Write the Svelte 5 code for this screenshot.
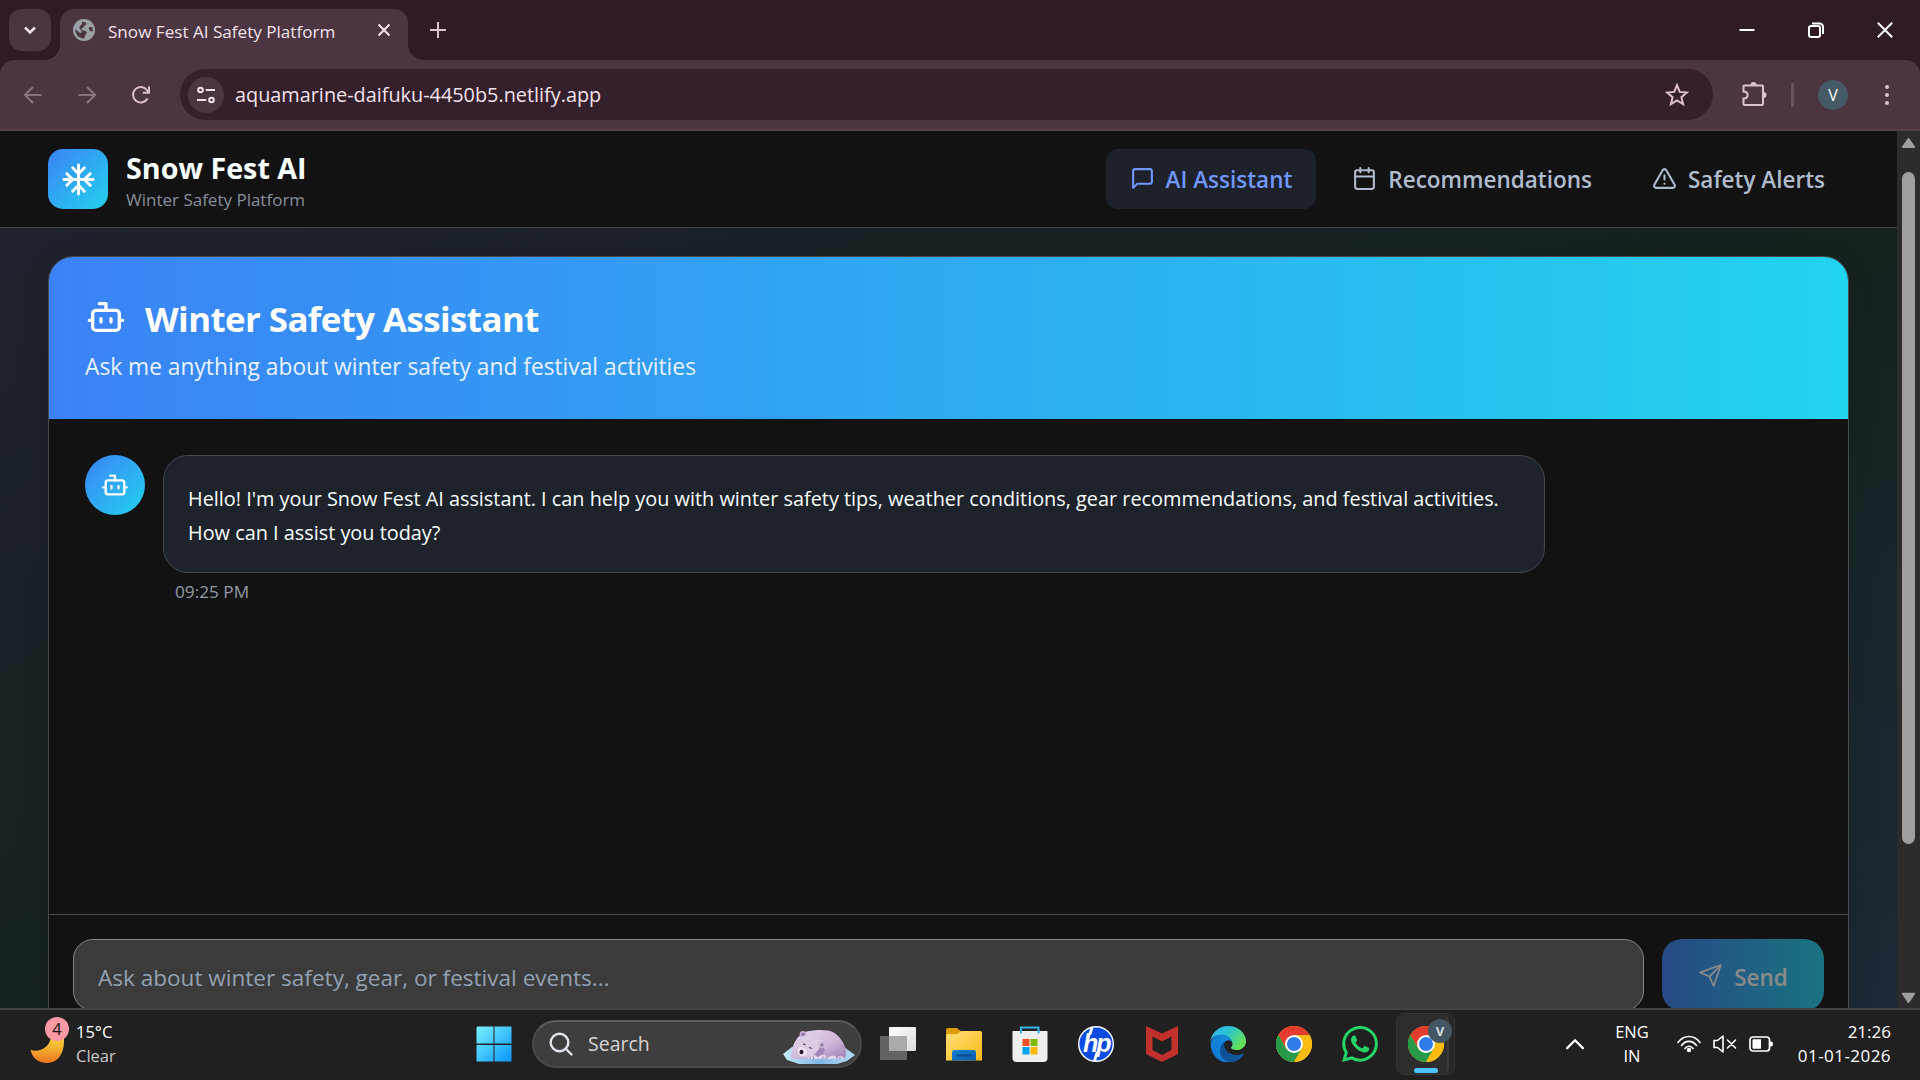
<script>
	let draft = "";

	const navItems = [
		{label: "AI Assistant", icon: "chat", active: true},
		{label: "Recommendations", icon: "calendar", active: false},
		{label: "Safety Alerts", icon: "alert", active: false}
	];

	const messages = [
		{
			text: "Hello! I'm your Snow Fest AI assistant. I can help you with winter safety tips, weather conditions, gear recommendations, and festival activities. How can I assist you today?",
			time: "09:25 PM"
		}
	];

	const apps = ["taskview", "explorer", "store", "hp", "mcafee", "edge", "chrome", "whatsapp"];
</script>

{#snippet bot()}
	<svg class="line" viewBox="0 0 24 24"><path d="M12 8V4H8" /><rect width="16" height="12" x="4" y="8" rx="2" /><path d="M2 14h2M20 14h2M15 13v2M9 13v2" /></svg>
{/snippet}

{#snippet chrome()}
	<svg viewBox="0 0 36 36">
		<circle cx="18" cy="18" r="18" fill="#fbbc12" />
		<path d="M2.400 9A18 18 0 0 1 33.600 9L18 9.500 10.200 22.500z" fill="#e33b2e" />
		<path d="M2.400 9A18 18 0 0 0 18 36L25.800 22.500 18 26 10.200 22.500z" fill="#269a48" />
		<path d="M18 9h15.600a18 18 0 0 1-15.600 27l7.800-13.500z" fill="#fbbc12" />
		<circle cx="18" cy="18" r="9" fill="#fff" />
		<circle cx="18" cy="18" r="7" fill="#2f7bea" />
	</svg>
{/snippet}

<div class="screen">
	<div class="tabstrip">
		<button class="tabsearch" aria-label="Search tabs"><svg class="line" viewBox="0 0 16 16"><path d="M3 5.500l5 5 5-5" /></svg></button>
		<div class="tab">
			<svg class="favicon" viewBox="0 0 22 22">
				<circle cx="11" cy="11" r="11" fill="#9aa0a6" />
				<path d="M9 2.500c2 1 4 .5 4.500 2S11 6.500 10.500 8 8 9 8.500 10.500s4 .5 5 2.500-1.500 2-1.500 4-1.500 2.500-2.500 2.500A9 9 0 0 1 2.200 10l4 3.500c1 .8 2.300.5 2.300-1S6 10 6.500 8 9 6 9 4.500z" fill="#4b3541" />
				<path d="M16 8.500c1-1 3-.5 3.500.5l.3 3c-1 1-2.300.5-2.800-.5s-2-2-1-3z" fill="#4b3541" />
			</svg>
			<span class="tabtitle">Snow Fest AI Safety Platform</span>
			<svg class="line tabclose" viewBox="0 0 14 14"><path d="M1.500 1.500l11 11M12.500 1.500l-11 11" /></svg>
		</div>
		<svg class="line newtab" viewBox="0 0 16 16"><path d="M8 0v16M0 8h16" /></svg>
		<div class="wincontrols">
			<svg class="line" viewBox="0 0 16 16"><path d="M.5 8h15" /></svg>
			<svg class="line" viewBox="0 0 16 16"><rect x="1" y="4" width="11" height="11" rx="2" /><path d="M4 1.500h7.500a3.500 3.500 0 0 1 3.500 3.500V12" /></svg>
			<svg class="line" viewBox="0 0 16 16"><path d="M.8.8l14.400 14.400M15.200.8L.8 15.200" /></svg>
		</div>
	</div>

	<div class="toolbar">
		<svg class="line nav dim" viewBox="0 0 18 18"><path d="M17.500 9H1.500M9 1L1 9l8 8" /></svg>
		<svg class="line nav dim" viewBox="0 0 18 18"><path d="M.5 9h16M9 1l8 8-8 8" /></svg>
		<svg class="line nav" viewBox="0 0 18 18"><path d="M15.500 12.500A7.700 7.700 0 1 1 14.800 4l2 2.500M17 .5v6.300h-6.200" /></svg>
		<div class="omnibox">
			<span class="siteinfo"><svg class="line" viewBox="0 0 18 18"><circle cx="3.500" cy="4" r="2.300" /><path d="M9.500 4h8M.5 14h8" /><circle cx="14.500" cy="14" r="2.300" /></svg></span>
			<span class="url">aquamarine-daifuku-4450b5.netlify.app</span>
			<svg class="line star" viewBox="0 0 24 24"><path d="M12 2.200l2.700 6.700 7.200.6-5.500 4.700 1.700 7L12 17.500l-6.100 3.700 1.700-7-5.500-4.700 7.200-.6z" /></svg>
		</div>
		<svg class="puzzle" viewBox="0 0 26 26"><path d="M4 5.500h17a1 1 0 0 1 1 1V24a1 1 0 0 1-1 1H3.500a1 1 0 0 1-1-1v-5.500c5.500 0 5.500-7 0-7V6.500a1 1 0 0 1 1-1z" fill="none" stroke="#dfc0d0" stroke-width="2" /><path d="M9.500 5a3 3 0 0 1 6 0zM22.500 12a3 3 0 0 1 0 6z" fill="#dfc0d0" /></svg>
		<i class="sep"></i>
		<span class="profile">V</span>
		<span class="dots"><i></i><i></i><i></i></span>
	</div>

	<div class="view">
		<div class="page">
			<header>
				<div class="logo"><svg class="line" viewBox="0 0 24 24"><path d="M2 12h20M12 2v20M20 16l-4-4 4-4M4 8l4 4-4 4M16 4l-4 4-4-4M8 20l4-4 4 4" /></svg></div>
				<div class="brand">
					<h1>Snow Fest AI</h1>
					<p>Winter Safety Platform</p>
				</div>
				<nav>
					{#each navItems as item}
						<button class:active={item.active}>
							<svg class="line" viewBox="0 0 24 24">
								{#if item.icon === "chat"}
									<path d="M21 15a2 2 0 0 1-2 2H7l-4 4V5a2 2 0 0 1 2-2h14a2 2 0 0 1 2 2z" />
								{:else if item.icon === "calendar"}
									<path d="M8 2v4M16 2v4M3 10h18" /><rect width="18" height="18" x="3" y="4" rx="2" />
								{:else}
									<path d="M21.730 18l-8-14a2 2 0 0 0-3.480 0l-8 14A2 2 0 0 0 4 21h16a2 2 0 0 0 1.730-3zM12 9v4M12 17h.01" />
								{/if}
							</svg>
							<span>{item.label}</span>
						</button>
					{/each}
				</nav>
			</header>

			<main>
				<section class="card">
					<div class="hero">
						<h2>{@render bot()}<span>Winter Safety Assistant</span></h2>
						<p>Ask me anything about winter safety and festival activities</p>
					</div>
					<div class="messages">
						{#each messages as message}
							<div class="message">
								<div class="avatar">{@render bot()}</div>
								<div>
									<div class="bubble">{message.text}</div>
									<div class="time">{message.time}</div>
								</div>
							</div>
						{/each}
					</div>
					<div class="composer">
						<input bind:value={draft} placeholder="Ask about winter safety, gear, or festival events..." />
						<button class="send" disabled={!draft}>
							<svg class="line" viewBox="0 0 24 24"><path d="M22 2l-7 20-4-9-9-4zM22 2L11 13" /></svg>
							<span>Send</span>
						</button>
					</div>
				</section>
			</main>
		</div>
		<div class="scrollbar">
			<svg viewBox="0 0 14 11"><path d="M7 1.500L12.500 9.500h-11z" /></svg>
			<i></i>
			<svg viewBox="0 0 14 11"><path d="M7 9.500L1.500 1.500h11z" /></svg>
		</div>
	</div>

	<footer>
		<div class="weather">
			<svg viewBox="0 0 36 36">
				<defs><linearGradient id="moon" x1="0" y1="0" x2="0" y2="1"><stop offset="0" stop-color="#f6cf3c" /><stop offset=".4" stop-color="#f3b530" /><stop offset="1" stop-color="#ee7420" /></linearGradient></defs>
				<path d="M1.500 22.500C11 25 21 20 22 9h13v5c0 13-7 21.500-17 21.500-9 0-14.500-5-16.500-13z" fill="url(#moon)" />
			</svg>
			<span class="badge">4</span>
			<div><div>15°C</div><div class="muted">Clear</div></div>
		</div>

		<div class="apps">
			<svg class="start" viewBox="0 0 36 36">
				<defs><linearGradient id="win" gradientUnits="userSpaceOnUse" x1="0" y1="0" x2="36" y2="36"><stop offset="0" stop-color="#7df3ff" /><stop offset=".5" stop-color="#3fc4fd" /><stop offset="1" stop-color="#0a92fb" /></linearGradient></defs>
				<path d="M1.500.5H17.500v17H.500v-16zM18.500.5h17v17h-17zM.500 19H17.500v16.500H.500zM18.500 19h17v16.500h-17z" fill="url(#win)" />
			</svg>
			<div class="search">
				<svg class="line" viewBox="0 0 24 24"><circle cx="10.500" cy="10.500" r="8.800" /><path d="M17 17l5.500 5.500" /></svg>
				<span>Search</span>
				<svg class="bear" viewBox="0 0 72 34">
					<defs>
						<linearGradient id="fur" x1="0" y1="0" x2="1" y2="1"><stop offset="0" stop-color="#e9dcf0" /><stop offset=".6" stop-color="#cdb5d6" /><stop offset="1" stop-color="#9a7eb4" /></linearGradient>
						<linearGradient id="ice" x1="0" y1="0" x2="1" y2="0"><stop offset="0" stop-color="#c9ebfb" /><stop offset=".5" stop-color="#7fb6e6" /><stop offset="1" stop-color="#b5dcf2" /></linearGradient>
					</defs>
					<path d="M0 24l9-7h52l11 8-8 6-10 3H16L4 30z" fill="url(#ice)" />
					<path d="M8 27C8 17 14 2 27 1c8-1.500 13-1 18-.5 10 2 17 12 18 21 0 5-1 7-3 7.500H12c-3 0-4-1-4-2z" fill="url(#fur)" />
					<circle cx="20" cy="4.500" r="3.400" fill="#c5abd1" />
					<circle cx="20.300" cy="4.800" r="1.800" fill="#8c719f" />
					<path d="M17 8c5-5 15-4 20 1 4 5 4 11 0 15-5 4-15 4-20 1s-4-12 0-17z" fill="#dccbe4" />
					<path d="M37 16c4 1 6 3 4 7-3 4-8 5-13 5l-5-1c8-1 12-5 14-11z" fill="#a488ba" />
					<circle cx="39" cy="14.500" r="3.400" fill="#d0bada" />
					<circle cx="39" cy="15" r="1.700" fill="#92779f" />
					<path d="M16 18c4-2 8 1 8 4.500s-5 4.500-7 3-3-5.500-1-7.500z" fill="#eee3f2" />
					<ellipse cx="18.500" cy="22" rx="2" ry="2.300" fill="#231a2b" />
					<path d="M20 14l2.500.6M26 17.500l3 1" stroke="#463352" stroke-width="1.200" />
					<path d="M24 29c0-4 9-6 11-1.500 2-4 9-3.500 10 1 2-4 8-4 9-.5 2-3 6-3 7 1z" fill="#e2d4ea" />
					<path d="M27 29v-2.500M30.500 29v-2.500M40 29v-2.500M43 29v-2.500M54 29v-2.500M57 29v-2.500" stroke="#9d84ae" />
				</svg>
			</div>
			{#each apps as app}
				<span class="app">
					{#if app === "taskview"}
						<svg viewBox="0 0 36 36"><defs><linearGradient id="tv" x1="0" y1="0" x2="1" y2="1"><stop offset="0" stop-color="#fff" /><stop offset="1" stop-color="#dcdcdc" /></linearGradient></defs><rect x="9" y="1" width="27" height="24" rx="1" fill="url(#tv)" /><rect x="0" y="10" width="27" height="24" rx="1" fill="#707070" opacity=".85" /><path d="M9 10h18v15H9z" fill="#aaa" /></svg>
					{:else if app === "explorer"}
						<svg viewBox="0 0 36 36"><defs><linearGradient id="fold" x1="0" y1="0" x2="1" y2="1"><stop offset="0" stop-color="#ffe07a" /><stop offset="1" stop-color="#fbb917" /></linearGradient><linearGradient id="fb" x1="0" y1="0" x2="1" y2="1"><stop offset="0" stop-color="#1581d6" /><stop offset="1" stop-color="#0d5ca8" /></linearGradient></defs><path d="M0 3.500Q0 2 1.500 2H11l5 4-3 4H0z" fill="#dd9d05" /><path d="M0 9.500Q0 8 1.500 8H11l4.500-3H34.500q1.500 0 1.500 1.500V34.500H0z" fill="url(#fold)" /><path d="M6 34.500V27q0-3 3-3h18q3 0 3 3v7.500z" fill="url(#fb)" /><path d="M11.500 29.500h13" stroke="#0b4a8c" stroke-width="2" stroke-linecap="round" /></svg>
					{:else if app === "store"}
						<svg viewBox="0 0 36 36"><path d="M.5 5h35v27q0 4-4 4h-27q-4 0-4-4z" fill="#efefef" /><path d="M9 7.500V1.500h17.500v6" fill="none" stroke="#33b4ea" stroke-width="2" /><path d="M10.500 13h7v7h-7z" fill="#f25022" /><path d="M18.500 13h7v7h-7z" fill="#7fba00" /><path d="M10.500 21h7v7.500h-7z" fill="#00a4ef" /><path d="M18.500 21h7v7.500h-7z" fill="#ffb900" /></svg>
					{:else if app === "hp"}
						<svg viewBox="0 0 36 36"><circle cx="18" cy="18" r="17.300" fill="#0a4be0" stroke="#fff" stroke-width="1.400" /><path d="M14 1.500l-2.200 7M19.300 26l-2.800 9" stroke="#fff" stroke-width="2.800" /><text class="hp" x="5" y="25.500">hp</text></svg>
					{:else if app === "mcafee"}
						<svg viewBox="0 0 36 36"><path d="M2 0l16 7.500L34 0v28l-16 8L2 28zM8.500 10.500v13.500l9.500 5 9.500-5V10.500L18 15.500z" fill="#c2302c" fill-rule="evenodd" /></svg>
					{:else if app === "edge"}
						<svg viewBox="0 0 256 256">
							<defs>
								<linearGradient id="e1" x1=".2" y1="0" x2="1" y2="0"><stop offset="0" stop-color="#0d4e97" /><stop offset="1" stop-color="#1260a8" /></linearGradient>
								<linearGradient id="e2" x1="1" y1="0" x2="0" y2="1"><stop offset="0" stop-color="#1a8fd8" /><stop offset="1" stop-color="#0d75d4" /></linearGradient>
								<linearGradient id="e3" x1="0" y1="0" x2="1" y2=".5"><stop offset="0" stop-color="#35b5f1" /><stop offset=".5" stop-color="#2bc3d2" /><stop offset="1" stop-color="#62e05a" /></linearGradient>
							</defs>
							<path d="M235.700 195.500a93.700 93.700 0 0 1-10.600 4.700 101.900 101.900 0 0 1-35.900 6.400c-47.300 0-88.500-32.500-88.500-74.300a31.500 31.500 0 0 1 16.400-27.300c-42.800 1.800-53.800 46.400-53.800 72.500 0 74 68.100 81.400 82.800 81.400 7.900 0 19.800-2.300 27-4.600l1.300-.4a128.300 128.300 0 0 0 66.600-52.800 4 4 0 0 0-5.300-5.600z" fill="url(#e1)" />
							<path d="M105.700 241.400A79.200 79.200 0 0 1 83 220.100a80.700 80.700 0 0 1 34.100-115.200c3.200-1.500 8.500-4.100 15.600-4a32.400 32.400 0 0 1 25.700 13 31.900 31.900 0 0 1 6.300 18.700c0-.2 24.500-79.600-80-79.600-43.900 0-80 41.700-80 78.200a130.200 130.200 0 0 0 12.100 56 128 128 0 0 0 156.400 67 75.500 75.500 0 0 1-62.800-8z" fill="url(#e2)" />
							<path d="M152.300 148.900c-.9 1-3.400 2.500-3.400 5.600 0 2.600 1.700 5.200 4.800 7.300 14.300 10 41.400 8.600 41.500 8.600a59.600 59.600 0 0 0 30.300-8.300 61.400 61.400 0 0 0 30.400-52.900c.3-22.400-8-37.300-11.300-43.900C223.500 23.900 177.700 0 128 0A128 128 0 0 0 0 126.200c.5-36.500 36.800-66 80-66 3.500 0 23.500.3 42 10.100 16.300 8.600 24.900 19 30.800 29.200 6.200 10.700 7.300 24.100 7.300 29.500 0 5.300-2.700 13.300-7.800 19.900z" fill="url(#e3)" />
						</svg>
					{:else if app === "chrome"}
						{@render chrome()}
					{:else}
						<svg viewBox="0 0 24 24"><path fill="#25d366" d="M17.472 14.382c-.297-.149-1.758-.867-2.030-.967-.273-.099-.471-.148-.67.15-.197.297-.767.966-.94 1.164-.173.199-.347.223-.644.075-.297-.15-1.255-.463-2.390-1.475-.883-.788-1.480-1.761-1.653-2.059-.173-.297-.018-.458.13-.606.134-.133.298-.347.446-.52.149-.174.198-.298.298-.497.099-.198.05-.371-.025-.52-.075-.149-.669-1.612-.916-2.207-.242-.579-.487-.5-.669-.51-.173-.008-.371-.01-.57-.01-.198 0-.52.074-.792.372-.272.297-1.040 1.016-1.040 2.479 0 1.462 1.065 2.875 1.213 3.074.149.198 2.096 3.200 5.077 4.487.709.306 1.262.489 1.694.625.712.227 1.360.195 1.871.118.571-.085 1.758-.719 2.006-1.413.248-.694.248-1.289.173-1.413-.074-.124-.272-.198-.57-.347m-5.421 7.403h-.004a9.870 9.870 0 0 1-5.031-1.378l-.361-.214-3.741.982.998-3.648-.235-.374a9.860 9.860 0 0 1-1.510-5.260c.001-5.450 4.436-9.884 9.888-9.884 2.640 0 5.122 1.030 6.988 2.898a9.825 9.825 0 0 1 2.893 6.994c-.003 5.450-4.437 9.884-9.885 9.884m8.413-18.297A11.815 11.815 0 0 0 12.050 0C5.495 0 .16 5.335.157 11.892c0 2.096.547 4.142 1.588 5.945L.057 24l6.305-1.654a11.882 11.882 0 0 0 5.683 1.448h.005c6.554 0 11.890-5.335 11.893-11.893a11.821 11.821 0 0 0-3.480-8.413z" /></svg>
					{/if}
				</span>
			{/each}
			<div class="running"><div class="tile">{@render chrome()}<span class="who">V</span><i></i></div></div>
		</div>

		<div class="tray">
			<svg class="line up" viewBox="0 0 16 10"><path d="M1 9l7-7 7 7" /></svg>
			<div class="lang"><div>ENG</div><div>IN</div></div>
			<svg class="wifi" viewBox="0 0 24 18"><path d="M1 7.500C7-.5 17-.5 23 7.500M4.500 10.500c4-5.500 11-5.500 15 0M8 13.500c2-3 6-3 8 0" fill="none" stroke="#fff" stroke-width="1.600" stroke-linecap="round" /><circle cx="12" cy="15" r="2.200" fill="#fff" /></svg>
			<svg class="volume" viewBox="0 0 24 18"><path d="M1 5.500h3.500L10 1v16L4.500 12.500H1zM14.500 5l8 8M22.500 5l-8 8" fill="none" stroke="#fff" stroke-width="1.600" stroke-linejoin="round" stroke-linecap="round" /></svg>
			<svg class="battery" viewBox="0 0 24 18"><rect x="1" y="2" width="19.500" height="14" rx="3" fill="none" stroke="#fff" stroke-width="1.700" /><path d="M3.500 5q0-.7.7-.7H12v9.400H4.200q-.7 0-.7-.7zM21 6.500h1.300q1.700 0 1.700 2.500t-1.700 2.500H21z" fill="#fff" /></svg>
			<div class="clock"><div>21:26</div><div class="date">01-01-2026</div></div>
		</div>
	</footer>
</div>

<style>
:global(body) {
	margin: 0;
	background: #121212;
}

.screen {
	width: 1920px;
	height: 1080px;
	overflow: hidden;
	display: flex;
	flex-direction: column;
	background: #2e1b26;
	font-family: "Open Sans", "Noto Sans", sans-serif;
	color: #fff;
}

.screen * {
	box-sizing: border-box;
}

h1, h2, p {
	margin: 0;
}

button, input {
	font: inherit;
	border: none;
	margin: 0;
	padding: 0;
}

svg {
	display: block;
	flex: none;
}

.line {
	fill: none;
	stroke: currentColor;
	stroke-width: 2;
	stroke-linecap: round;
	stroke-linejoin: round;
}

/* browser window */
.tabstrip {
	height: 60px;
	flex: none;
	display: flex;
	align-items: flex-start;
	padding: 9px 27px 0 9px;
}

.tabsearch {
	width: 42px;
	height: 42px;
	border-radius: 13px;
	background: #4b3541;
	color: #f3dfe9;
	display: flex;
	align-items: center;
	justify-content: center;
}

.tabsearch svg {
	width: 16px;
	stroke-width: 2.6;
	stroke-linecap: butt;
	stroke-linejoin: miter;
}

.tab {
	position: relative;
	width: 348px;
	height: 51px;
	margin-left: 9px;
	padding: 0 17px 9px 13px;
	border-radius: 14px 14px 0 0;
	background: #4b3541;
	display: flex;
	align-items: center;
}

.tab::before, .tab::after {
	content: "";
	position: absolute;
	bottom: 0;
	width: 15px;
	height: 15px;
}

.tab::before {
	left: -15px;
	background: radial-gradient(circle at 0 0, transparent 14.5px, #4b3541 15px);
}

.tab::after {
	right: -15px;
	background: radial-gradient(circle at 100% 0, transparent 14.5px, #4b3541 15px);
}

.favicon {
	width: 22px;
}

.tabtitle {
	margin: 2px auto 0 13px;
	font-size: 17.1px;
	color: #f3e1ea;
	white-space: nowrap;
}

.tabclose {
	width: 14px;
	color: #f3e1ea;
	stroke-linecap: butt;
}

.newtab {
	width: 16px;
	margin: 13px 0 0 22px;
	color: #dfc0d0;
	stroke-linecap: butt;
}

.wincontrols {
	margin: 13px 0 0 auto;
	display: flex;
	gap: 53px;
}

.wincontrols svg {
	width: 16px;
	stroke-linecap: butt;
}

.toolbar {
	height: 71px;
	flex: none;
	display: flex;
	align-items: center;
	padding: 0 30px 0 24px;
	background: #4b3541;
	border-bottom: 2px solid #54404b;
	border-radius: 14px 14px 0 0;
	color: #dfc0d0;
}

.nav {
	width: 18px;
	margin-right: 36px;
	stroke-linecap: butt;
	stroke-linejoin: miter;
}

.nav.dim {
	color: #8a7380;
}

.omnibox {
	width: 1533px;
	height: 51px;
	margin-left: -6px;
	padding: 0 24px 0 8px;
	border-radius: 26px;
	background: #34202b;
	display: flex;
	align-items: center;
}

.siteinfo {
	width: 36px;
	height: 36px;
	border-radius: 50%;
	background: #4b3541;
	color: #f3e1ea;
	display: flex;
	align-items: center;
	justify-content: center;
}

.siteinfo svg {
	width: 18px;
}

.url {
	margin: 0 auto 0 11px;
	font-size: 19.85px;
	color: #f3e1ea;
}

.star {
	width: 24px;
	stroke-linejoin: miter;
}

.puzzle {
	width: 26px;
	margin: 0 0 3px 28px;
}

.sep {
	width: 3px;
	height: 24px;
	margin-left: 24px;
	background: #6a5160;
}

.profile {
	width: 30px;
	height: 30px;
	margin-left: 24px;
	border-radius: 50%;
	background: #455a64;
	color: #fff;
	font-size: 16px;
	line-height: 30px;
	text-align: center;
}

.dots {
	margin-left: auto;
	padding-right: 1px;
	display: flex;
	flex-direction: column;
	gap: 4px;
}

.dots i {
	width: 4px;
	height: 4px;
	border-radius: 50%;
	background: #dfc0d0;
}

.view {
	height: 877px;
	flex: none;
	display: flex;
	overflow: hidden;
}

.page {
	width: 1897px;
	height: 877px;
	overflow: hidden;
}

.scrollbar {
	width: 23px;
	padding: 6px 5px 4px;
	background: #2c2c2c;
	display: flex;
	flex-direction: column;
}

.scrollbar svg {
	width: 15px;
	margin-left: -1px;
	fill: #9f9f9f;
	stroke: #9f9f9f;
	stroke-width: 1.5;
	stroke-linejoin: round;
}

.scrollbar i {
	width: 13px;
	height: 672px;
	margin: 23px 0 auto;
	border-radius: 7px;
	background: #9f9f9f;
}

/* app header */
header {
	height: 97px;
	padding: 0 48px;
	background: #121212;
	border-bottom: 1px solid #3f4444;
	display: flex;
	align-items: center;
}

.logo {
	width: 60px;
	height: 60px;
	border-radius: 15px;
	background: linear-gradient(135deg, #3b82f6, #22d3ee);
	display: flex;
	align-items: center;
	justify-content: center;
}

.logo svg {
	width: 35px;
}

.brand {
	margin: 3px 0 0 18px;
}

h1 {
	font-size: 28.7px;
	line-height: 38px;
	font-weight: 700;
	color: #f8ffff;
}

.brand p {
	font-size: 17px;
	line-height: 25px;
	color: #888e9b;
}

nav {
	margin-left: auto;
	display: flex;
	gap: 12px;
}

nav button {
	height: 60px;
	padding: 0 24px;
	border-radius: 12px;
	background: transparent;
	color: #b0bccd;
	font-size: 22.5px;
	font-weight: 600;
	display: flex;
	align-items: center;
	gap: 11px;
}

nav svg {
	width: 25px;
	margin-bottom: 1px;
	stroke-width: 1.6;
}

nav span {
	margin-top: 1px;
}

nav button.active {
	background: #1d222a;
	color: #7196ff;
}

main {
	padding: 28px 48px 0;
	height: 960px;
	background: linear-gradient(to bottom right, #1f222c, #152220 50%, #1f2a39);
}

.card {
	height: 800px;
	border: 1px solid #4a4a4a;
	border-radius: 25px;
	background: #121212;
	overflow: hidden;
	box-shadow: 0 4px 30px rgba(0, 0, 0, .12);
	display: flex;
	flex-direction: column;
}

.hero {
	height: 162px;
	flex: none;
	padding: 36px;
	background: linear-gradient(90deg, #3b82f6, #22d3ee);
}

h2 {
	height: 50px;
	display: flex;
	align-items: center;
	gap: 19px;
	font-size: 34.8px;
	line-height: 50px;
	font-weight: 700;
	letter-spacing: -.55px;
}

h2 span {
	margin-top: 2px;
}

h2 svg {
	width: 40px;
	margin: 0 0 2px 1px;
}

.hero p {
	margin-top: 7px;
	font-size: 22.75px;
	line-height: 34px;
	color: #e8f3fe;
}

.messages {
	height: 495px;
	flex: none;
	padding: 36px;
}

.message {
	display: flex;
	gap: 18px;
}

.avatar {
	width: 60px;
	height: 60px;
	flex: none;
	border-radius: 50%;
	background: linear-gradient(135deg, #3b82f6, #22d3ee);
	display: flex;
	align-items: center;
	justify-content: center;
}

.avatar svg {
	width: 28px;
}

.bubble {
	width: 1382px;
	height: 118px;
	padding: 26px 24px 24px;
	border: 1px solid #44484e;
	border-radius: 25px;
	background: #1e222a;
	font-size: 19.87px;
	line-height: 34px;
	color: #f8ffff;
}

.time {
	margin: 6px 0 0 12px;
	font-size: 17.2px;
	line-height: 25px;
	color: #9299a3;
}

.composer {
	border-top: 1px solid #4a4a4a;
	padding: 24px 24px;
	display: flex;
	gap: 18px;
}

input {
	width: 1571px;
	height: 72px;
	padding: 4px 24px 0;
	border: 1px solid #858585;
	border-radius: 20px;
	background: #3b3b3b;
	color: #fff;
	font-size: 22.55px;
}

input::placeholder {
	color: #94a0b0;
	opacity: 1;
}

.send {
	width: 162px;
	height: 72px;
	border-radius: 20px;
	background: linear-gradient(90deg, #3b82f6, #22d3ee);
	opacity: .5;
	color: #fff;
	font-size: 22.5px;
	font-weight: 600;
	display: flex;
	align-items: center;
	justify-content: center;
	gap: 11px;
}

.send svg {
	width: 25px;
	stroke-width: 1.6;
}

.send span {
	margin-top: 4px;
}

/* taskbar */
footer {
	height: 72px;
	flex: none;
	background: #202020;
	border-top: 2px solid #424242;
	display: flex;
	align-items: center;
	padding: 0 29px 2px 29px;
	font-size: 16.5px;
	line-height: 24px;
}

.weather {
	position: relative;
	width: 447px;
	display: flex;
	gap: 11px;
}

.weather svg {
	width: 36px;
	margin-top: 3px;
}

.badge {
	position: absolute;
	left: 16px;
	top: -3px;
	width: 24px;
	height: 24px;
	border-radius: 50%;
	background: #ff99a4;
	color: #111;
	text-align: center;
}

.muted {
	color: #c8c8c8;
}

.apps {
	display: flex;
	align-items: center;
}

.start {
	width: 36px;
}

.search {
	width: 330px;
	height: 48px;
	margin: 0 3px 0 20px;
	padding: 0 7px 0 15px;
	border: 2px solid #4a4a4a;
	border-top-color: #5e5b5e;
	border-radius: 24px;
	background: #3e3e3e;
	color: #d4d4d4;
	font-size: 19.5px;
	display: flex;
	align-items: center;
	gap: 15px;
}

.search .line {
	width: 24px;
	color: #dfe3ea;
	stroke-width: 2.4;
}

.bear {
	width: 72px;
	margin: 6px -2px 0 auto;
}

.app {
	width: 66px;
	display: flex;
	justify-content: center;
}

.app svg {
	width: 36px;
}

.hp {
	font: italic 700 25px "Liberation Sans", sans-serif;
	letter-spacing: -2px;
	fill: #fff;
}

.running {
	width: 59px;
	height: 62px;
	margin-left: 3px;
	border: 1px solid #333;
	border-radius: 8px;
	background: #262626;
}

.tile {
	position: relative;
	width: 52px;
	height: 60px;
	padding: 12px 0 0 11px;
	border-radius: 7px;
	background: #2d2d2d;
	border-right: 2px solid #3a3a3a;
}

.tile svg {
	width: 36px;
}

.who {
	position: absolute;
	left: 31px;
	top: 5px;
	width: 24px;
	height: 24px;
	border-radius: 50%;
	background: #435661;
	color: #d5dde2;
	font-size: 13px;
	font-weight: 700;
	text-align: center;
}

.tile i {
	position: absolute;
	left: 17px;
	bottom: 1px;
	width: 24px;
	height: 5px;
	border-radius: 3px;
	background: #4cc2ff;
}

.tray {
	margin-left: auto;
	display: flex;
	align-items: center;
}

.up {
	width: 18px;
	margin-right: 30px;
}

.lang {
	width: 36px;
	text-align: center;
	margin-right: 27px;
}

.wifi, .volume, .battery {
	width: 24px;
	margin-right: 12px;
}

.clock {
	width: 106px;
	font-size: 17px;
	text-align: right;
}

.date {
	letter-spacing: .45px;
}
</style>
